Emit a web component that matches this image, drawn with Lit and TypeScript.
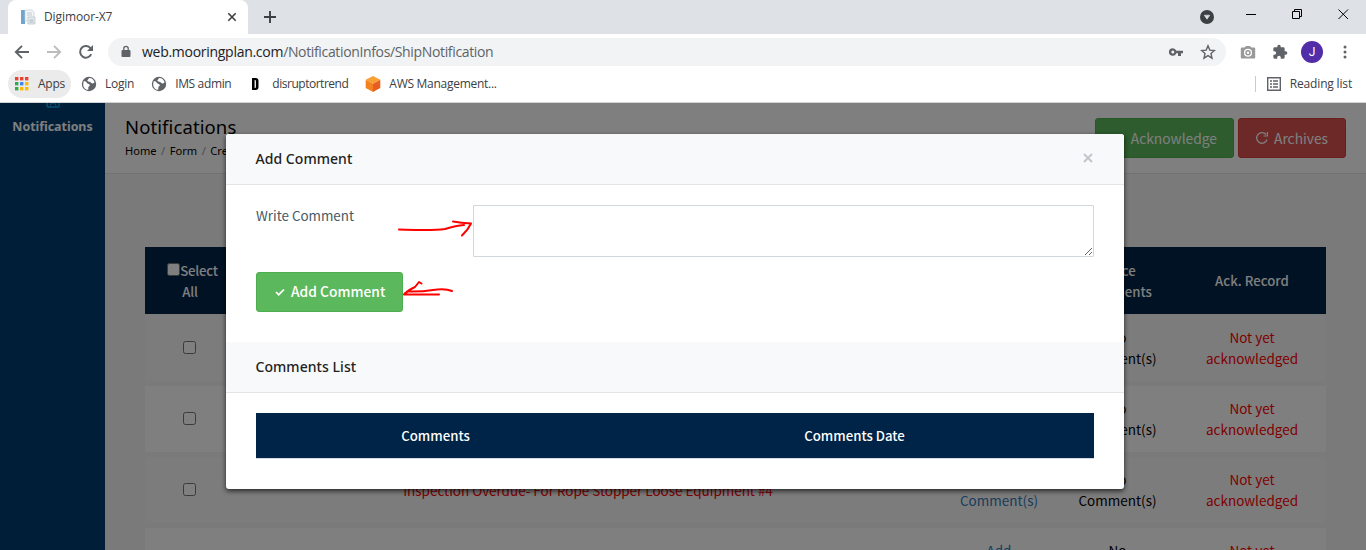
import { LitElement, html, css, svg } from "lit";
import { customElement } from "lit/decorators.js";

const globe = svg`<svg class="i16" viewBox="0 0 16 16"><circle cx="8" cy="8" r="7.2" fill="#5f6368"/><path d="M2.600 5.400C4 5 5.500 5.600 5.800 6.800 6.200 8 8.400 7.600 8.800 9c.3 1.200-1.500 1.300-1.500 2.500v2.300C4.500 13.800 2 11.500 2.200 8zM8 2.100c-.2 1.500-1.800 1.400-1.600 2.600.2 1 1.800.6 2.800 1.400.8.700 1.600 1.500 2.700 1.300l1.700-.9C13 4 11 2 8 2.100z" fill="#fff"/></svg>`;

@customElement("browser-chrome")
class BrowserChrome extends LitElement {
  static styles = css`
    :host { display: block; height: 103px; box-sizing: border-box; border-bottom: 1px solid #d3d3d3; background: #fff;
      font: 12px/16px "Open Sans", "Noto Sans", sans-serif; color: #3c4043; }
    svg { display: block; flex: none; }
    .strip { height: 34px; background: #dee1e6; display: flex; padding-left: 8px; }
    .tab { width: 240px; height: 34px; background: #fff; border-radius: 8px 8px 0 0; display: flex; align-items: center;
      box-sizing: border-box; padding: 0 10px 0 12px; }
    .title { margin-left: 8px; flex: 1; letter-spacing: -0.1px; }
    .plus { margin: 10px 0 0 15px; }
    .win { margin-left: auto; display: flex; }
    .bar { height: 36px; display: flex; align-items: center; padding: 0 0 0 14px; box-sizing: border-box; }
    .nav { display: flex; gap: 16px; }
    .url { margin-left: 14px; width: 1118px; height: 28px; border-radius: 14px; background: #f1f3f4; display: flex; align-items: center;
      box-sizing: border-box; padding: 0 10px 0 12px; font-size: 14px; letter-spacing: -0.35px; color: #5f6368; }
    .url b { font-weight: 400; color: #202124; letter-spacing: -0.28px; }
    .addr { margin-left: 10px; flex: 1; }
    .star { margin-left: 16px; }
    .cam { margin-left: 14px; }
    .puz { margin-left: 16px; }
    .ava { margin-left: 13px; width: 22px; height: 22px; border-radius: 50%; background: #512da8; color: #fff; text-align: center; font: 12px/22px Roboto, sans-serif; }
    .dots { margin-left: 14px; }
    .marks { height: 28px; display: flex; align-items: center; padding-left: 8px; letter-spacing: -0.25px; }
    .apps { width: 63px; height: 28px; border-radius: 14px; background: #ebebeb; display: flex; align-items: center; box-sizing: border-box; padding-left: 7px; gap: 9px; }
    .m { display: flex; align-items: center; gap: 8px; }
    .m1 { margin-left: 10px; } .m2 { margin-left: 17px; letter-spacing: -0.35px; } .m3 { margin-left: 13px; gap: 6px; letter-spacing: -0.48px; }
    .m4 { margin-left: 17px; gap: 8px; letter-spacing: -0.28px; }
    .read { margin-left: auto; margin-right: 14px; border-left: 1px solid #c8cacd; height: 16px; display: flex; gap: 8px; padding-left: 10px; align-items: center; letter-spacing: -0.17px; }
    .i16 { width: 16px; height: 16px; }
  `;
  render() {
    const c = ["#ea4335", "#ea4335", "#ea4335", "#34a853", "#4285f4", "#fbbc05", "#34a853", "#fbbc05", "#fbbc05"];
    return html`
      <div class="strip">
        <div class="tab">
          <svg class="i16" viewBox="0 0 16 16"><path d="M1 1h4v14H1z" fill="#6ea6cf"/><path d="M5 1h7l2 2v9H5z" fill="#f3f6f8" stroke="#c4cdd5" stroke-width=".7"/><path d="M7 4h5M7 6h5" stroke="#bfc9d1"/><path d="M8 8h7v7H8z" fill="#e7ebee" stroke="#b5bec6" stroke-width=".7"/><path d="M9.500 11h4M9.500 13h4" stroke="#aab4bc"/></svg>
          <span class="title">Digimoor-X7</span>
          <svg width="12" height="12" viewBox="0 0 12 12"><path d="M2.300 2.300l7.400 7.400M9.700 2.300l-7.400 7.400" stroke="#3c4043" stroke-width="1.600"/></svg>
        </div>
        <svg class="plus" width="14" height="14" viewBox="0 0 14 14"><path d="M7 1v12M1 7h12" stroke="#3c4043" stroke-width="1.900"/></svg>
        <svg class="win" width="175" height="34" viewBox="1191 0 175 34"><circle cx="1207" cy="17" r="7" fill="#3c4043"/><path d="M1204.200 15.200h5.600l-2.800 4z" fill="#dee1e6" stroke="#dee1e6" stroke-width=".6" stroke-linejoin="round"/><path d="M1246 14.500h10M1292.500 11.500h7v7h-7zM1294.500 11V9.500h7v7H1300" fill="none" stroke="#000"/><path d="M1338.500 9.500l9.500 9.500M1348 9.500l-9.500 9.500" stroke="#000"/></svg>
      </div>
      <div class="bar">
        <div class="nav">
          <svg class="i16" viewBox="0 0 16 16"><path d="M15 8H2.500M8 1.800 1.800 8 8 14.200" fill="none" stroke="#5f6368" stroke-width="1.900"/></svg>
          <svg class="i16" viewBox="0 0 16 16"><path d="M1 8h12.500M8 1.800 14.200 8 8 14.200" fill="none" stroke="#babcbe" stroke-width="1.900"/></svg>
          <svg class="i16" viewBox="0 0 16 16"><path d="M13.200 10.200A5.800 5.800 0 1 1 12.600 4.400" fill="none" stroke="#5f6368" stroke-width="2"/><path d="M15 1v6H9z" fill="#5f6368"/></svg>
        </div>
        <div class="url">
          <svg width="12" height="14" viewBox="0 0 12 14"><path d="M2.500 5h7q1 0 1 1v5q0 1-1 1h-7q-1 0-1-1V6q0-1 1-1z" fill="#5f6368"/><path d="M3.800 6V3.600a2.200 2.200 0 0 1 4.400 0V6" fill="none" stroke="#5f6368" stroke-width="1.300"/></svg>
          <span class="addr"><b>web.mooringplan.com</b>/NotificationInfos/ShipNotification</span>
          <svg width="16" height="16" viewBox="0 0 16 16"><path d="M4.800 4.200a3.800 3.800 0 1 0 3.500 5.100H10V12h3V9.300h2V6.700H8.300a3.800 3.800 0 0 0-3.500-2.500zm0 2.300a1.500 1.500 0 1 1 0 3 1.500 1.500 0 0 1 0-3z" fill="#5f6368" fill-rule="evenodd"/></svg>
          <svg class="star" width="16" height="16" viewBox="0 0 16 16"><path d="M8 1.800l1.800 4.300 4.700.4-3.500 3.100 1 4.600-4-2.500-4 2.500 1-4.600-3.500-3.100 4.700-.4z" fill="none" stroke="#5f6368" stroke-width="1.400"/></svg>
        </div>
        <svg class="cam" width="16" height="16" viewBox="0 0 16 16"><path d="M1.800 3.500h2.700L6 2h4l1.500 1.500h2.700q1 0 1 1v9q0 1-1 1H1.800q-1 0-1-1v-9q0-1 1-1z" fill="#999"/><circle cx="8" cy="8.800" r="3.400" fill="#999" stroke="#fff" stroke-width="1.300"/><circle cx="8" cy="8.800" r="1.200" fill="#fff"/></svg>
        <svg class="puz" width="16" height="16" viewBox="0 0 24 24"><path d="M20.500 11H19V7a2 2 0 0 0-2-2h-4V3.500a2.500 2.500 0 0 0-5 0V5H4a2 2 0 0 0-2 2v3.800h1.500a2.700 2.700 0 0 1 0 5.400H2V20a2 2 0 0 0 2 2h3.800v-1.500a2.700 2.700 0 0 1 5.400 0V22H17a2 2 0 0 0 2-2v-4h1.500a2.500 2.500 0 0 0 0-5z" fill="#5f6368"/></svg>
        <span class="ava">J</span>
        <svg class="dots" width="16" height="16" viewBox="0 0 16 16" fill="#5f6368"><circle cx="8" cy="3" r="1.500"/><circle cx="8" cy="8" r="1.500"/><circle cx="8" cy="13" r="1.500"/></svg>
      </div>
      <div class="marks">
        <div class="apps"><svg width="14" height="14" viewBox="0 0 14 14">${c.map((f, i) => svg`<rect x=${(i % 3) * 5} y=${Math.floor(i / 3) * 5} width="3.400" height="3.400" fill=${f}/>`)}</svg><span>Apps</span></div>
        <div class="m m1">${globe}<span>Login</span></div>
        <div class="m m2">${globe}<span>IMS admin</span></div>
        <div class="m m3"><svg width="22" height="16" viewBox="0 0 22 16"><path fill-rule="evenodd" d="M8 2h3.500q3 0 3 3v6q0 3-3 3H8zm2.600 2v8q1.300.3 1.300-1V5q0-1.300-1.300-1z" fill="#000"/></svg><span>disruptortrend</span></div>
        <div class="m m4"><svg class="i16" viewBox="0 0 16 16"><path d="M8 0l7.300 3.800L8 7.800.700 3.800z" fill="#f9a033"/><path d="M.700 3.800 8 7.800V16L.700 12z" fill="#f58220"/><path d="M15.300 3.800 8 7.800V16l7.300-4z" fill="#e85e20"/></svg><span>AWS Management...</span></div>
        <div class="read"><svg width="16" height="16" viewBox="0 0 16 16"><path d="M1.700 1.700h12.600v12.600H1.700z" fill="none" stroke="#5f6368" stroke-width="1.400"/><path d="M4 5h2M7 5h5M4 8h2M7 8h5M4 11h2M7 11h5" stroke="#5f6368" stroke-width="1.400"/></svg><span>Reading list</span></div>
      </div>`;
  }
}

@customElement("notifications-page")
class NotificationsPage extends LitElement {
  static styles = css`
    :host { display: flex; height: 447px; overflow: hidden; font: 13.500px/21px "Noto Sans CJK SC", sans-serif; color: #000; }
    * { box-sizing: border-box; }
    .side { width: 105px; flex: none; background: #003c70; display: flex; flex-direction: column; align-items: center; }
    .side svg { display: block; margin-top: -7px; }
    .side span { margin-top: 9px; font: 700 12.400px/20px "Noto Sans", sans-serif; color: #fff; }
    .main { flex: 1; background: #f4f4f4; }
    .head { height: 71px; background: #fff; border-bottom: 1px solid #e4e4e4; display: flex; justify-content: space-between; padding: 11px 20px 0; }
    h1 { margin: 0; padding-bottom: 2px; font: 400 18.500px/25px "Noto Sans", sans-serif; letter-spacing: 0.1px; }
    .crumb { font: 11.100px/20px "Noto Sans", sans-serif; display: flex; gap: 4.500px; }
    .crumb i { font-style: normal; color: #999; }
    .btns { display: flex; gap: 4px; padding-top: 4px; }
    .btn { height: 40px; border-radius: 3px; color: #fff; font: 13.800px/37px "Noto Sans CJK SC", sans-serif; display: flex; align-items: center; }
    .ok { width: 139px; background: #5cb85c; border: 1px solid #4cae4c; justify-content: flex-end; padding-right: 16px; }
    .no { width: 108px; background: #d9534f; border: 1px solid #d43f3a; padding-left: 16px; gap: 5px; }
    .table { margin: 73px 40px 0; display: flex; flex-direction: column; gap: 5px; }
    .row { height: 66px; display: grid; grid-template-columns: 90px 1fr 116px 121px 148px; align-items: center; text-align: center; background: #fff; }
    .row.odd { background: #f8f9fb; }
    .row.th { height: 67px; margin-bottom: -4px; background: #002447; color: #fff; font-weight: 500; font-size: 13.200px; }
    .red { color: #f00; } .link { color: #337ab7; }
    .msg { letter-spacing: -0.03px; }
    .cb { display: inline-block; width: 13px; height: 13px; border: 1px solid #767676; border-radius: 2.500px; background: #fff; vertical-align: 0; }
    .sel { padding-left: 5px; letter-spacing: -0.2px; }
    .all { display: block; margin-left: -5px; }
    .solo { display: block; margin: 0 auto 1px 38px; }
  `;
  render() {
    const rows = ["", "", "Inspection Overdue- For Rope Stopper Loose Equipment #4", ""];
    return html`
      <div class="side"><svg width="14" height="12" viewBox="0 0 14 12"><rect x="1" y="-4" width="12" height="15" rx="1" fill="none" stroke="#0aa5e0" stroke-width="1.400"/><path d="M4 9.500l1.500-2.500h3L10 9.500" fill="none" stroke="#0aa5e0" stroke-width="1.200"/></svg><span>Notifications</span></div>
      <div class="main">
        <div class="head">
          <div><h1>Notifications</h1><div class="crumb"><span>Home</span><i>/</i><span>Form</span><i>/</i><span>Create</span></div></div>
          <div class="btns">
            <div class="btn ok">Acknowledge</div>
            <div class="btn no"><svg width="14" height="14" viewBox="0 0 14 14"><path d="M12 8.500A5.300 5.300 0 1 1 11 3.500" fill="none" stroke="#fff" stroke-width="1.300"/><path d="M12.400 1v4H8.500" fill="none" stroke="#fff" stroke-width="1.200"/></svg>Archives</div>
          </div>
        </div>
        <div class="table">
          <div class="row th"><div class="sel"><span class="cb"></span>Select<span class="all">All</span></div><div></div><div></div><div>Office<br>Comments</div><div>Ack. Record</div></div>
          ${rows.map((m, i) => html`<div class="row ${i % 2 ? "" : "odd"}"><span class="cb solo"></span><div class="red msg">${m}</div><div class="link">Add<br>Comment(s)</div><div>No<br>Comment(s)</div><div class="red">Not yet<br>acknowledged</div></div>`)}
        </div>
      </div>`;
  }
}

@customElement("comment-dialog")
class CommentDialog extends LitElement {
  static styles = css`
    :host { display: block; box-sizing: border-box; width: 898px; height: 355px; background: #fff; border-radius: 3px; overflow: hidden;
      box-shadow: 0 2px 5px rgba(0,0,0,.7); font: 14px/20px "Noto Sans", sans-serif; color: #222; }
    * { box-sizing: border-box; }
    .hd { height: 51px; background: #f8f9fb; border-bottom: 1px solid #e2e4e6; padding: 0 30.500px 1px 29.500px; display: flex; align-items: center; justify-content: space-between; font-weight: 500; letter-spacing: 0.05px; }
    .hd svg { margin-bottom: 2px; }
    .form { height: 157px; padding: 20px 30px; display: flex; flex-direction: column; gap: 15px; align-items: flex-start; }
    .line { display: flex; align-self: stretch; }
    label { width: 217px; font: 13.400px/20px "Noto Sans CJK SC", sans-serif; color: #455a64; }
    textarea { display: block; width: 621px; height: 52px; border: 1px solid #cfd8dc; border-radius: 1px; padding: 0; margin: 0; outline: 0; background: #fff; }
    .btn { width: 147px; height: 40px; background: #5cb85c; border: 1px solid #4cae4c; border-radius: 3px; color: #fff; font: 500 13.800px/36px "Noto Sans CJK SC", sans-serif;
      display: flex; align-items: center; gap: 5px; padding-left: 17px; }
    .btn span { margin-top: -2px; }
    .grid { margin: 20px 30px 0; height: 46px; border-bottom: 1px solid #d5dade; background: #002447; color: #fff; display: grid; grid-template-columns: 359px 1fr; text-align: center;
      font: 500 13.200px/46px "Noto Sans CJK SC", sans-serif; }
  `;
  render() {
    return html`
      <div class="hd"><span>Add Comment</span><svg width="12" height="12" viewBox="0 0 12 12"><path d="M2 2l8 8M10 2l-8 8" stroke="#c3c5c9" stroke-width="2"/></svg></div>
      <div class="form">
        <div class="line"><label>Write Comment</label><textarea></textarea></div>
        <div class="btn"><svg width="12" height="12" viewBox="0 0 12 12"><path d="M2 6l2.700 2.700L10 3.500" fill="none" stroke="#fff" stroke-width="1.700"/></svg><span>Add Comment</span></div>
      </div>
      <div class="hd">Comments List</div>
      <div class="grid"><span>Comments</span><span>Comments Date</span></div>`;
  }
}

@customElement("app-root")
class AppRoot extends LitElement {
  static styles = css`
    :host { display: block; position: relative; width: 1366px; height: 550px; overflow: hidden; }
    .shade { position: absolute; inset: 103px 0 0; background: rgba(0,0,0,.5); }
    comment-dialog { position: absolute; left: 226px; top: 134px; }
    .ink { position: absolute; left: 390px; top: 210px; }
  `;
  render() {
    return html`<browser-chrome></browser-chrome><notifications-page></notifications-page>
      <div class="shade"></div><comment-dialog></comment-dialog>
      <svg class="ink" width="90" height="95" viewBox="390 210 90 95" fill="none" stroke="#f00" stroke-width="2" stroke-linecap="round" stroke-linejoin="round">
        <path d="M399 229.500C415 230 432 231 445 229Q456 225.500 464 225M453 221.500Q461 223 471 223.500Q468 230 462 235.500"/>
        <path d="M421.500 283.500L419 282L415 287Q408 290 404 294.500H439M407 291.500Q421 292 433 290T452 291"/>
      </svg>`;
  }
}
